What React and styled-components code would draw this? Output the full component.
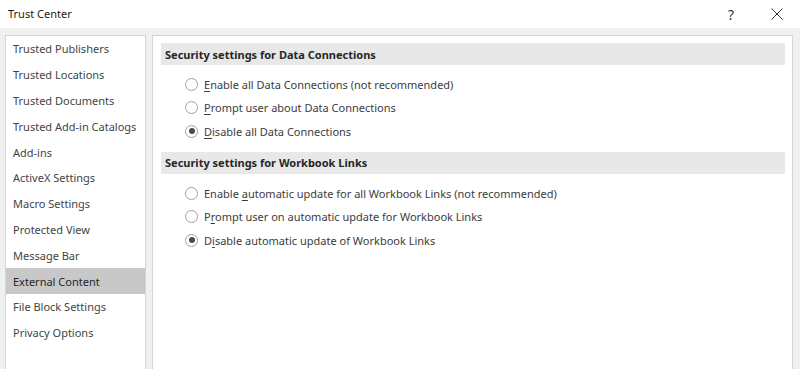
import React from 'react';
import styled, { createGlobalStyle } from 'styled-components';

const GlobalStyle = createGlobalStyle`
	html, body {
		margin: 0;
		padding: 0;
		background: #f0f0f0;
		overflow: hidden;
	}
	body {
		font-family: 'Segoe UI', 'Noto Sans', sans-serif;
		font-size: 11px;
		color: #262626;
	}
`;

const Dialog = styled.div`
	width: 800px;
	height: 369px;
	display: flex;
	flex-direction: column;
	background: #f0f0f0;
	overflow: hidden;
`;

const TitleBar = styled.div`
	height: 28px;
	flex: none;
	display: flex;
	align-items: center;
	background: #ffffff;
	padding-left: 8px;
`;

const Title = styled.div`
	flex: 1;
	font-size: 11px;
	color: #1a1a1a;
	margin-top: -1px;
`;

const TitleButton = styled.button`
	width: 46px;
	height: 28px;
	border: none;
	background: transparent;
	display: flex;
	align-items: center;
	justify-content: center;
	padding: 0;
	color: #333;
	font-family: 'Segoe UI', 'Noto Sans', sans-serif;
	font-size: 14px;
`;

const Body = styled.div`
	flex: 1;
	display: flex;
	gap: 6px;
	padding: 7px 7px 0 5px;
	min-height: 0;
`;

const Sidebar = styled.ul`
	width: 139px;
	flex: none;
	margin: 0;
	padding: 0;
	list-style: none;
	background: #ffffff;
	border: 1px solid #d4d4d4;
	border-bottom: none;
`;

const NavItem = styled.li`
	height: 25.8px;
	display: flex;
	align-items: center;
	padding-left: 7px;
	color: #444444;
	background: ${(p) => (p.$active ? '#c8c8c8' : 'transparent')};
	${(p) => (p.$active ? 'color: #262626;' : '')}
	white-space: nowrap;
`;

const Content = styled.div`
	flex: 1;
	background: #ffffff;
	border: 1px solid #d4d4d4;
	border-bottom: none;
	padding: 7px 7px 0 8px;
`;

const SectionHeader = styled.div`
	height: 22px;
	display: flex;
	align-items: center;
	padding-left: 4px;
	background: #e8e8e8;
	font-weight: bold;
	color: #262626;
`;

const Options = styled.div`
	display: flex;
	flex-direction: column;
	padding: 8px 0 9px 24px;
`;

const OptionRow = styled.label`
	height: 23.3px;
	display: flex;
	align-items: center;
	gap: 6px;
	color: #3c3c3c;
`;

const Radio = styled.span`
	width: 11px;
	height: 11px;
	border-radius: 50%;
	border: 1px solid #a0a0a0;
	background: #fff;
	display: flex;
	align-items: center;
	justify-content: center;
	flex: none;

	&::after {
		content: '';
		width: 6px;
		height: 6px;
		border-radius: 50%;
		background: ${(p) => (p.$checked ? '#4a4a4a' : 'transparent')};
	}
`;

const Key = styled.span`
	text-decoration: underline;
	text-underline-offset: 2px;
`;

const navItems = [
	'Trusted Publishers',
	'Trusted Locations',
	'Trusted Documents',
	'Trusted Add-in Catalogs',
	'Add-ins',
	'ActiveX Settings',
	'Macro Settings',
	'Protected View',
	'Message Bar',
	'External Content',
	'File Block Settings',
	'Privacy Options',
];

const sections = [
	{
		title: 'Security settings for Data Connections',
		options: [
			['', 'E', 'nable all Data Connections (not recommended)'],
			['', 'P', 'rompt user about Data Connections'],
			['', 'D', 'isable all Data Connections'],
		],
		checked: 2,
	},
	{
		title: 'Security settings for Workbook Links',
		options: [
			['Enable ', 'a', 'utomatic update for all Workbook Links (not recommended)'],
			['P', 'r', 'ompt user on automatic update for Workbook Links'],
			['D', 'i', 'sable automatic update of Workbook Links'],
		],
		checked: 2,
	},
];

const CloseIcon = () => (
	<svg width="12" height="12" viewBox="0 0 12 12">
		<path d="M0.5 0.5 L11.5 11.5 M11.5 0.5 L0.5 11.5" stroke="#333" strokeWidth="1" fill="none" />
	</svg>
);

export default function App() {
	return (
		<Dialog>
			<GlobalStyle />
			<TitleBar>
				<Title>Trust Center</Title>
				<TitleButton>?</TitleButton>
				<TitleButton>
					<CloseIcon />
				</TitleButton>
			</TitleBar>
			<Body>
				<Sidebar>
					{navItems.map((item) => (
						<NavItem key={item} $active={item === 'External Content'}>
							{item}
						</NavItem>
					))}
				</Sidebar>
				<Content>
					{sections.map((section) => (
						<div key={section.title}>
							<SectionHeader>{section.title}</SectionHeader>
							<Options>
								{section.options.map(([pre, key, rest], i) => (
									<OptionRow key={i}>
										<Radio $checked={i === section.checked} />
										<span>
											{pre}
											<Key>{key}</Key>
											{rest}
										</span>
									</OptionRow>
								))}
							</Options>
						</div>
					))}
				</Content>
			</Body>
		</Dialog>
	);
}
